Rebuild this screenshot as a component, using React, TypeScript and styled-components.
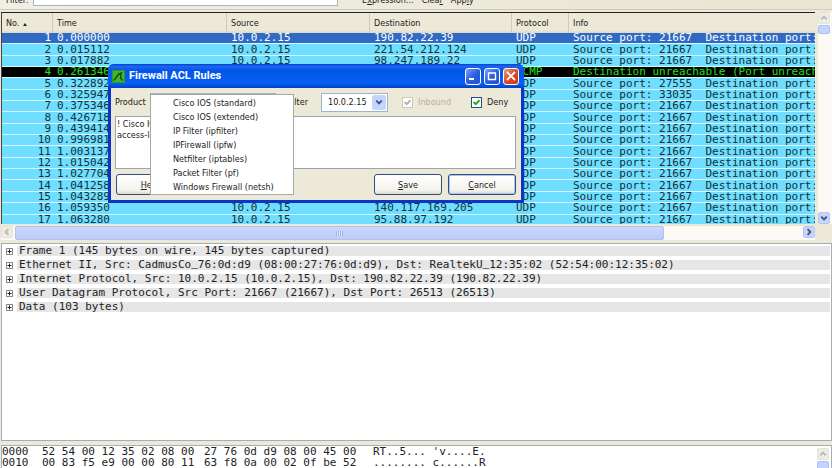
import React from "react";
import styled, { createGlobalStyle, css } from "styled-components";

const MONO = '"DejaVu Sans Mono", "Liberation Mono", monospace';
const UI = '"DejaVu Sans Condensed", "Open Sans", sans-serif';

const GlobalStyle = createGlobalStyle`
  * { box-sizing: border-box; }
  html, body { margin: 0; height: 100%; }
  body { background: #ece9d8; font: 9px/12px ${UI}; color: #222; overflow: hidden; }
  #root { height: 100%; }
  button, input, select, textarea { font: inherit; color: inherit; margin: 0; }
`;

const Page = styled.div`
  position: relative;
  height: 100vh;
  display: flex;
  flex-direction: column;
  overflow: hidden;
`;

const Toolbar = styled.form`
  flex: none;
  display: flex;
  align-items: flex-end;
  height: 10px;
  padding-bottom: 3px;
  margin-bottom: 2px;
  border-bottom: 1px solid #cfccbb;
  background: linear-gradient(90deg, #f1efe5, #e8e5d2);
`;
const FilterLabel = styled.label`
  width: 33px;
  padding-left: 6px;
  line-height: 12px;
`;
const FilterInput = styled.input`
  width: 305px;
  height: 20px;
  border: 1px solid #a5b5c5;
  background: #fff;
  margin-right: 24px;
`;
const ToolButton = styled.button`
  border: 0;
  padding: 0;
  margin-right: 8px;
  background: none;
  line-height: 12px;
  u { text-underline-offset: 1px; }
`;

const ListArea = styled.section`
  flex: none;
  display: grid;
  grid-template-columns: minmax(0, 1fr) 14px;
  grid-template-rows: 212px 14px;
  column-gap: 3px;
  row-gap: 2px;
  padding-left: 1px;
  margin-bottom: 3px;
`;
const ListFrame = styled.div`
  overflow: hidden;
  border-top: 1px solid #222;
  border-left: 1px solid #444;
  background: #fff;
`;
const PacketTable = styled.table`
  width: 100%;
  height: 213px;
  table-layout: fixed;
  border-collapse: separate;
  border-spacing: 0;
`;
const Col = styled.col<{ $w?: number }>`
  ${(p) => p.$w && css`width: ${p.$w}px;`}
`;
const HeadCell = styled.th`
  height: 20px;
  padding: 0 0 0 4px;
  font-weight: 400;
  text-align: left;
  background: linear-gradient(#ece9d8 85%, #dcd8c4);
  border-left: 1px solid #d0ccba;
  white-space: nowrap;
  &:first-child { border-left: 0; }
  svg { margin-left: 4px; }
`;
type Tone = "selected" | "normal" | "error";
const tones = {
  selected: css`background: #316ac5; color: #fff;`,
  normal: css`background: #70dfff; color: #12303a;`,
  error: css`background: #000; color: #1fe01f;`,
};
const PacketRow = styled.tr<{ $tone: Tone }>`
  ${(p) => tones[p.$tone]}
`;
const Cell = styled.td<{ $right?: boolean }>`
  padding: 0 0 0 5px;
  border-bottom: 1px solid #d8f6ff;
  font: 11px/10px ${MONO};
  white-space: pre;
  overflow: hidden;
  ${(p) => p.$right && css`text-align: right; padding: 0 1px 0 0;`}
`;

const VScroll = styled.div`
  display: flex;
  flex-direction: column;
  justify-content: space-between;
  background: #fbfaf5;
`;
const HScroll = styled.div`
  display: flex;
  background: #fbfaf5;
  gap: 2px;
`;
const ScrollButton = styled.button<{ $off?: boolean }>`
  flex: none;
  display: grid;
  place-items: center;
  width: 12px;
  height: 12px;
  padding: 0;
  border: 1px solid ${(p) => (p.$off ? "#e4e2d8" : "#b4c8f6")};
  border-radius: 2px;
  background: ${(p) => (p.$off ? "#efede3" : "#c4d4fc")};
  color: ${(p) => (p.$off ? "#b9b8b0" : "#3c557c")};
`;
const ScrollTop = styled.div`
  display: grid;
  gap: 1px;
  justify-items: start;
`;
const VThumb = styled.div`
  width: 12px;
  height: 9px;
  border: 1px solid #a9c0f5;
  border-radius: 2px;
  background: #c4d4fc;
`;
const HThumb = styled.div`
  flex: 0 1 649px;
  display: grid;
  place-items: center;
  border: 1px solid #b0c2f4;
  border-radius: 2px;
  background: linear-gradient(#cad8fe, #bccbf8);
  margin-right: auto;
`;
const Grip = styled.div`
  width: 7px;
  height: 5px;
  background: repeating-linear-gradient(90deg, #9db2e6 0 1px, #dce6ff 1px 2px);
`;

const DetailPane = styled.section`
  flex: 0 0 198px;
  margin: 0 0 4px 1px;
  padding: 0 1px;
  border: 1px solid #9fb0bb;
  background: #fff;
`;
const TreeRow = styled.div`
  display: flex;
  align-items: center;
  height: 14px;
  gap: 4px;
  padding-left: 3px;
`;
const Expander = styled.button`
  flex: none;
  display: grid;
  width: 7px;
  height: 7px;
  padding: 0;
  border: 0;
  background: none;
`;
const TreeText = styled.div`
  flex: 1;
  min-width: 0;
  height: 10px;
  padding-left: 2px;
  background: #e6e6e6;
  font: 11px/10px ${MONO};
  white-space: pre;
`;
const Underscore = styled.span`
  font-family: "Liberation Mono", monospace;
`;

const HexPane = styled.section`
  flex: 1;
  min-height: 0;
  display: flex;
  justify-content: space-between;
  margin-left: 1px;
  border: 1px solid #9fb0bb;
  border-bottom: 0;
  background: #fff;
  overflow: hidden;
`;
const HexDump = styled.div`
  display: grid;
  grid-template-columns: 40px 162px 169px auto;
  grid-auto-rows: 11px;
  font: 11px/11px ${MONO};
  white-space: pre;
`;
const HexScroll = styled.div`
  width: 14px;
  padding-top: 2px;
`;

const Dialog = styled.div`
  position: absolute;
  left: 108px;
  top: 64px;
  width: 416px;
  border: 3px solid #0a35c8;
  border-top: 0;
  border-radius: 6px 6px 0 0;
  background: #ece9d8;
`;
const TitleBar = styled.header`
  display: flex;
  align-items: center;
  gap: 3px;
  height: 24px;
  margin: 0 -3px;
  padding: 0 5px 0 4px;
  border-radius: 6px 6px 0 0;
  background: linear-gradient(#0a40c8, #1a66f0 10%, #0355e6 28%, #0560f4 80%, #0341c4);
  color: #fff;
`;
const Title = styled.h1`
  flex: 1;
  margin: 0;
  padding-left: 1px;
  font: bold 11px/14px Roboto, "Open Sans", sans-serif;
`;
const WinButton = styled.button<{ $close?: boolean }>`
  display: grid;
  place-items: center;
  width: 16px;
  height: 17px;
  padding: 0;
  border: 1px solid #fff;
  border-radius: 3px;
  background: ${(p) =>
    p.$close
      ? "linear-gradient(135deg, #f09a80, #dd4a25 50%, #c93a18)"
      : "linear-gradient(135deg, #7ba1f5, #2b5ee0 50%, #2450cf)"};
`;
const DialogBody = styled.div`
  padding: 4px 5px 5px 4px;
`;
const Controls = styled.div`
  display: flex;
  align-items: center;
  height: 20px;
`;
const Caption = styled.label`
  width: 35px;
`;
const FilterCaption = styled.label`
  width: 45px;
  padding-left: 12px;
`;
const Combo = styled.div<{ $w: number }>`
  display: flex;
  width: ${(p) => p.$w}px;
  height: 19px;
  padding: 1px;
  border: 1px solid #9db4ce;
  background: #fff;
`;
const Select = styled.select`
  flex: 1;
  min-width: 0;
  padding: 0 0 0 5px;
  border: 0;
  appearance: none;
  background: #fff;
`;
const ComboArrow = styled.span`
  display: grid;
  place-items: center;
  width: 14px;
  border-radius: 2px;
  background: #c4d4fc;
  color: #3c557c;
  pointer-events: none;
`;
const Check = styled.label<{ $off?: boolean; $gap: number }>`
  position: relative;
  display: flex;
  align-items: center;
  gap: 5px;
  margin-left: ${(p) => p.$gap}px;
  color: ${(p) => (p.$off ? "#b3b1a3" : "#222")};
  svg { position: absolute; left: 2px; }
`;
const Box = styled.input`
  appearance: none;
  width: 11px;
  height: 11px;
  border: 1px solid #1c5180;
  background: #fff;
  &:disabled { border-color: #cac8bb; }
`;
const RuleText = styled.textarea`
  display: block;
  width: 100%;
  height: 53px;
  margin-top: 4px;
  padding: 2px 1px;
  border: 1px solid #9aa5b0;
  background: #fff;
  line-height: 11px;
  resize: none;
  overflow: hidden;
`;
const Actions = styled.footer`
  display: flex;
  gap: 6px;
  margin-top: 5px;
  padding-left: 1px;
`;
const PushButton = styled.button<{ $default?: boolean; $first?: boolean }>`
  width: 68px;
  height: 21px;
  padding: 0;
  border: 1px solid #2f4f80;
  border-radius: 3px;
  background: linear-gradient(#fff, #f3f2ec 80%, #dddacb);
  ${(p) => p.$first && css`margin-right: auto;`}
  ${(p) => p.$default && css`box-shadow: inset 0 0 0 1px #a9c4f2;`}
`;
const Menu = styled.div`
  position: absolute;
  left: 39px;
  top: 30px;
  width: 144px;
  padding-top: 1px;
  border: 1px solid #aaa9a0;
  background: #fff;
`;
const MenuItem = styled.button`
  display: block;
  width: 100%;
  height: 14px;
  padding: 0 0 0 22px;
  border: 0;
  background: none;
  text-align: left;
  white-space: nowrap;
`;

const Chevron = ({ turn = 0 }: { turn?: number }) => (
  <svg width="8" height="8" viewBox="0 0 8 8">
    <path d="M1.2 2.6 4 5.4 6.8 2.6" fill="none" stroke="currentColor" strokeWidth="1.8" transform={`rotate(${turn} 4 4)`} />
  </svg>
);
const Tick = ({ color }: { color: string }) => (
  <svg width="7" height="7" viewBox="0 0 7 7">
    <path d="M0.6 3 2.7 5.2 6.4 1.2" fill="none" stroke={color} strokeWidth="1.8" />
  </svg>
);
const Fin = () => (
  <svg width="13" height="13" viewBox="0 0 13 13">
    <rect width="13" height="13" fill="#2f9a22" />
    <rect x="1" y="1" width="11" height="11" fill="#45b332" />
    <path d="M1.5 10.5C4.5 9.5 4.5 3.5 9.5 3 8 6 8.5 9 11 10.5" fill="none" stroke="#0d4a0c" strokeWidth="1.3" />
  </svg>
);
const SortMark = () => (
  <svg width="4" height="3" viewBox="0 0 4 3">
    <path d="M0 3 2 0 4 3z" fill="#222" />
  </svg>
);

const destinations: Record<number, string> = {
  1: "190.82.22.39", 2: "221.54.212.124", 3: "98.247.189.22",
  16: "140.117.169.205", 17: "95.88.97.192",
};
const times = [
  "0.000000", "0.015112", "0.017882", "0.261346", "0.322892", "0.325947",
  "0.375346", "0.426718", "0.439414", "0.996981", "1.003137", "1.015042",
  "1.027704", "1.041258", "1.043289", "1.059350", "1.063280",
];
const ports: Record<number, string> = { 5: "27555", 6: "33035" };
const packets = times.map((time, i) => {
  const no = i + 1;
  const error = no === 4;
  return {
    no,
    time,
    source: no in destinations ? "10.0.2.15" : "",
    destination: destinations[no] ?? "",
    protocol: error ? "ICMP" : "UDP",
    info: error
      ? "Destination unreachable (Port unreach"
      : `Source port: ${ports[no] ?? "21667"}  Destination port:`,
    tone: (error ? "error" : no === 1 ? "selected" : "normal") as Tone,
  };
});
const details = [
  "Frame 1 (145 bytes on wire, 145 bytes captured)",
  "Ethernet II, Src: CadmusCo_76:0d:d9 (08:00:27:76:0d:d9), Dst: RealtekU_12:35:02 (52:54:00:12:35:02)",
  "Internet Protocol, Src: 10.0.2.15 (10.0.2.15), Dst: 190.82.22.39 (190.82.22.39)",
  "User Datagram Protocol, Src Port: 21667 (21667), Dst Port: 26513 (26513)",
  "Data (103 bytes)",
];
const hex = [
  ["0000", "52 54 00 12 35 02 08 00", "27 76 0d d9 08 00 45 00", "RT..5... 'v....E."],
  ["0010", "00 83 f5 e9 00 00 80 11", "63 f8 0a 00 02 0f be 52", "........ c......R"],
];
const products = [
  "Cisco IOS (standard)", "Cisco IOS (extended)", "IP Filter (ipfilter)",
  "IPFirewall (ipfw)", "Netfilter (iptables)", "Packet Filter (pf)",
  "Windows Firewall (netsh)",
];

// DejaVu Sans Mono loses its underscore at this size, so it is set in Liberation Mono.
const withUnderscores = (line: string) =>
  line.split(/(_)/).map((part, i) =>
    part === "_" ? <Underscore key={i}>_</Underscore> : part,
  );

export default function App() {
  return (
    <Page>
      <GlobalStyle />
      <Toolbar>
        <FilterLabel htmlFor="filter">Filter:</FilterLabel>
        <FilterInput id="filter" />
        <ToolButton type="button">E<u>x</u>pression...</ToolButton>
        <ToolButton type="button">Clea<u>r</u></ToolButton>
        <ToolButton type="button">App<u>l</u>y</ToolButton>
      </Toolbar>

      <ListArea>
        <ListFrame>
          <PacketTable>
            <colgroup>
              <Col $w={50} /><Col $w={174} /><Col $w={143} />
              <Col $w={142} /><Col $w={57} /><Col />
            </colgroup>
            <thead>
              <tr>
                <HeadCell>No.<SortMark /></HeadCell>
                <HeadCell>Time</HeadCell>
                <HeadCell>Source</HeadCell>
                <HeadCell>Destination</HeadCell>
                <HeadCell>Protocol</HeadCell>
                <HeadCell>Info</HeadCell>
              </tr>
            </thead>
            <tbody>
              {packets.map((p) => (
                <PacketRow key={p.no} $tone={p.tone}>
                  <Cell $right>{p.no}</Cell>
                  <Cell>{p.time}</Cell>
                  <Cell>{p.source}</Cell>
                  <Cell>{p.destination}</Cell>
                  <Cell>{p.protocol}</Cell>
                  <Cell>{p.info}</Cell>
                </PacketRow>
              ))}
            </tbody>
          </PacketTable>
        </ListFrame>
        <VScroll>
          <ScrollTop>
            <ScrollButton $off aria-label="Scroll up"><Chevron turn={180} /></ScrollButton>
            <VThumb />
          </ScrollTop>
          <ScrollButton aria-label="Scroll down"><Chevron /></ScrollButton>
        </VScroll>
        <HScroll>
          <ScrollButton $off aria-label="Scroll left"><Chevron turn={90} /></ScrollButton>
          <HThumb><Grip /></HThumb>
          <ScrollButton aria-label="Scroll right"><Chevron turn={-90} /></ScrollButton>
        </HScroll>
      </ListArea>

      <DetailPane>
        {details.map((line) => (
          <TreeRow key={line}>
            <Expander aria-label="Expand">
              <svg width="7" height="7" viewBox="0 0 7 7">
                <rect x="0.5" y="0.5" width="6" height="6" fill="#fff" stroke="#8a8a8a" />
                <path d="M1.5 3.5h4M3.5 1.5v4" stroke="#222" />
              </svg>
            </Expander>
            <TreeText>{withUnderscores(line)}</TreeText>
          </TreeRow>
        ))}
      </DetailPane>

      <HexPane>
        <HexDump>
          {hex.flatMap((row) => row.map((part) => <span key={row[0] + part}>{part}</span>))}
        </HexDump>
        <HexScroll>
          <ScrollTop>
            <ScrollButton $off aria-label="Scroll bytes up"><Chevron turn={180} /></ScrollButton>
            <VThumb />
          </ScrollTop>
        </HexScroll>
      </HexPane>

      <Dialog role="dialog" aria-labelledby="dialog-title">
        <TitleBar>
          <Fin />
          <Title id="dialog-title">Firewall ACL Rules</Title>
          <WinButton aria-label="Minimize">
            <svg width="10" height="10"><path d="M1 8h5" stroke="#fff" strokeWidth="2" /></svg>
          </WinButton>
          <WinButton aria-label="Maximize">
            <svg width="10" height="10"><path d="M1 2h8M1.5 2v6.5h7V2" fill="none" stroke="#fff" strokeWidth="1.4" /></svg>
          </WinButton>
          <WinButton $close aria-label="Close">
            <svg width="10" height="10"><path d="M1 1l8 8M9 1l-8 8" stroke="#fff" strokeWidth="1.8" /></svg>
          </WinButton>
        </TitleBar>
        <DialogBody>
          <Controls>
            <Caption htmlFor="product">Product</Caption>
            <Combo $w={126}>
              <Select id="product" defaultValue="">
                <option value="" />
                {products.map((p) => <option key={p}>{p}</option>)}
              </Select>
              <ComboArrow><Chevron /></ComboArrow>
            </Combo>
            <FilterCaption htmlFor="address">Filter</FilterCaption>
            <Combo $w={67}>
              <Select id="address"><option>10.0.2.15</option></Select>
              <ComboArrow><Chevron /></ComboArrow>
            </Combo>
            <Check $off $gap={14}>
              <Box type="checkbox" defaultChecked disabled />
              <Tick color="#b3b1a3" />
              Inbound
            </Check>
            <Check $gap={20}>
              <Box type="checkbox" defaultChecked />
              <Tick color="#21a121" />
              Deny
            </Check>
          </Controls>
          <RuleText aria-label="Rules" defaultValue={"! Cisco IOS\naccess-list"} />
          <Actions>
            <PushButton $first><u>H</u>elp</PushButton>
            <PushButton><u>S</u>ave</PushButton>
            <PushButton $default><u>C</u>ancel</PushButton>
          </Actions>
        </DialogBody>
        <Menu role="menu">
          {products.map((p) => <MenuItem key={p} role="menuitem">{p}</MenuItem>)}
        </Menu>
      </Dialog>
    </Page>
  );
}
